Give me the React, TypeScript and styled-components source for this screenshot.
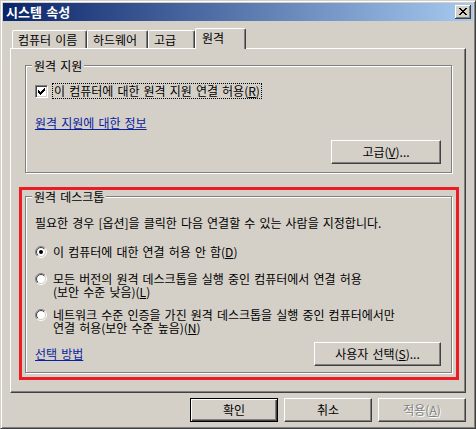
import React, { useId } from "react";
import styled, { createGlobalStyle } from "styled-components";

const GlobalStyle = createGlobalStyle`
  html, body { margin: 0; padding: 0; background: #D4D0C8; }
  body {
    font-family: "Noto Sans CJK KR", "Noto Sans", sans-serif;
    font-size: 12px;
    color: #000;
  }
  * { box-sizing: border-box; }
`;

const Win = styled.div`
  width: 476px;
  height: 429px;
  background: #d4d0c8;
  border: 1px solid;
  border-color: #d4d0c8 #404040 #404040 #d4d0c8;
  box-shadow: inset 1px 1px 0 #fff, inset -1px -1px 0 #808080;
  padding: 2px;
  display: flex;
  flex-direction: column;
  word-spacing: 1.4px;
  overflow: hidden;
`;

const TitleBar = styled.div`
  height: 18px;
  flex: none;
  display: flex;
  align-items: center;
  justify-content: space-between;
  padding: 0 2px 0 3px;
  background: linear-gradient(to right, #0a246a, #a6caf0);
`;

const TitleText = styled.span`
  color: #fff;
  font-weight: bold;
  font-size: 13px;
  line-height: 18px;
`;

const CloseBtn = styled.div`
  width: 16px;
  height: 14px;
  background: #d4d0c8;
  box-shadow: inset -1px -1px 0 #404040, inset 1px 1px 0 #fff,
    inset -2px -2px 0 #808080;
  display: flex;
  align-items: center;
  justify-content: center;
  padding-bottom: 1px;
`;

const Body = styled.div`
  flex: 1;
  display: flex;
  flex-direction: column;
  padding: 7px 7px 0 7px;
`;

const TabStrip = styled.div`
  height: 20px;
  flex: none;
  display: flex;
  align-items: flex-end;
  padding-left: 2px;
`;

const Tab = styled.div<{ $w: number; $active?: boolean }>`
  width: ${(p) => p.$w}px;
  height: ${(p) => (p.$active ? 21 : 18)}px;
  margin-bottom: ${(p) => (p.$active ? -1 : 0)}px;
  position: relative;
  z-index: ${(p) => (p.$active ? 1 : 0)};
  background: #d4d0c8;
  border-top: 1px solid #fff;
  border-left: 1px solid #fff;
  border-right: 1px solid #404040;
  border-radius: 2px 2px 0 0;
  box-shadow: inset -1px 0 0 #808080;
  display: flex;
  align-items: center;
  padding-left: ${(p) => (p.$active ? 6 : 5)}px;
  padding-bottom: ${(p) => (p.$active ? 2 : 0)}px;
  line-height: 12px;
  white-space: nowrap;
`;

const Panel = styled.div`
  height: 345px;
  flex: none;
  display: flex;
  flex-direction: column;
  align-items: flex-start;
  border-top: 1px solid #fff;
  border-left: 1px solid #fff;
  border-right: 1px solid #404040;
  border-bottom: 1px solid #404040;
  box-shadow: inset -1px -1px 0 #808080;
  padding-top: 16px;
`;

const Group = styled.div<{ $pb: number }>`
  width: 427px;
  display: flex;
  flex-direction: column;
  align-items: flex-start;
  border: 1px solid #808080;
  box-shadow: inset 1px 1px 0 #fff, 1px 1px 0 #fff;
  padding: 0 0 ${(p) => p.$pb}px 9px;
`;

const FirstGroup = styled(Group)`
  margin-left: 14px;
`;

const Legend = styled.div`
  margin: -7px 0 0 -3px;
  padding: 0 2px;
  background: #d4d0c8;
  line-height: 14px;
  white-space: nowrap;
`;

const RedFrame = styled.div`
  width: 440px;
  margin: 14px 0 0 8px;
  border: 3px solid #ed1c24;
  padding: 6px 0 4px 3px;
`;

const CheckRow = styled.div`
  margin-top: 10px;
  display: flex;
  align-items: center;
  gap: 4px;
`;

const CheckBox = styled.div`
  width: 13px;
  height: 13px;
  background: #fff;
  border: 1px solid;
  border-color: #808080 #fff #fff #808080;
  box-shadow: inset 1px 1px 0 #404040, inset -1px -1px 0 #d4d0c8;
  display: flex;
  align-items: center;
  justify-content: center;
`;

const FocusLabel = styled.span`
  border: 1px dotted #000;
  padding: 0 1px;
  line-height: 14px;
  white-space: nowrap;
`;

const Link = styled.a<{ $mt?: number }>`
  margin-top: ${(p) => p.$mt ?? 0}px;
  color: #0a22a0;
  text-decoration: underline;
  text-underline-offset: 1px;
  line-height: 14px;
  white-space: nowrap;
  cursor: pointer;
`;

const Mn = styled.span`
  text-decoration: underline;
  text-underline-offset: 1px;
`;

const Description = styled.div`
  margin-top: 12px;
  line-height: 13px;
  white-space: nowrap;
`;

const RadioRow = styled.div<{ $mt: number }>`
  margin-top: ${(p) => p.$mt}px;
  display: flex;
  align-items: flex-start;
  gap: 6px;
`;

const RadioLabel = styled.div`
  line-height: 13px;
  white-space: nowrap;
`;

const RadioSvg = styled.svg`
  flex: none;
  display: block;
  margin-top: 1px;
`;

const BottomRow = styled.div`
  align-self: stretch;
  margin-top: 8px;
  padding-right: 10px;
  display: flex;
  align-items: center;
  justify-content: space-between;
`;

const Button = styled.button<{ $w: number; $default?: boolean; $disabled?: boolean }>`
  width: ${(p) => p.$w}px;
  height: 24px;
  flex: none;
  margin: 0;
  padding: 0;
  font-family: inherit;
  font-size: 12px;
  word-spacing: 1.4px;
  line-height: 12px;
  background: #d4d0c8;
  color: ${(p) => (p.$disabled ? "#808080" : "#000")};
  text-shadow: ${(p) => (p.$disabled ? "1px 1px 0 #fff" : "none")};
  border: 1px solid;
  border-color: ${(p) => (p.$default ? "#000" : "#fff #404040 #404040 #fff")};
  box-shadow: ${(p) =>
    p.$default
      ? "inset 1px 1px 0 #fff, inset -1px -1px 0 #404040, inset -2px -2px 0 #808080"
      : "inset -1px -1px 0 #808080"};
  outline: none;
  white-space: nowrap;
`;

const AdvancedButton = styled(Button)`
  align-self: flex-end;
  margin: 10px 10px 0 0;
`;

const ButtonRow = styled.div`
  margin-top: 5px;
  display: flex;
  justify-content: flex-end;
  gap: 6px;
`;

const pixelPath = (rows: string[]) =>
  rows
    .map((r, y) =>
      [...r].map((c, x) => (c === "#" ? `M${x} ${y}h1v1h-1z` : "")).join("")
    )
    .join("");

const CLOSE = ["##....##", ".##..##.", "..####..", "...##...", "..####..", ".##..##.", "##....##"];
const CHECK = ["......#", ".....##", "#...###", "##.###.", "#####..", ".###...", "..#...."];

const CloseGlyph = () => (
  <svg width={8} height={7} viewBox="0 0 8 7" shapeRendering="crispEdges">
    <path d={pixelPath(CLOSE)} fill="#000" />
  </svg>
);

const CheckGlyph = () => (
  <svg width={7} height={7} viewBox="0 0 7 7" shapeRendering="crispEdges">
    <path d={pixelPath(CHECK)} fill="#000" />
  </svg>
);

const Radio = ({ checked }: { checked?: boolean }) => {
  const id = useId().replace(/[^a-zA-Z0-9]/g, "");
  return (
    <RadioSvg width={12} height={12} viewBox="0 0 12 12">
      <defs>
        <linearGradient id={`o${id}`} x1="0" y1="0" x2="1" y2="1">
          <stop offset="0.5" stopColor="#808080" />
          <stop offset="0.5" stopColor="#ffffff" />
        </linearGradient>
        <linearGradient id={`i${id}`} x1="0" y1="0" x2="1" y2="1">
          <stop offset="0.5" stopColor="#404040" />
          <stop offset="0.5" stopColor="#d4d0c8" />
        </linearGradient>
      </defs>
      <circle cx={6} cy={6} r={5.5} fill="none" stroke={`url(#o${id})`} strokeWidth={1} />
      <circle cx={6} cy={6} r={4.5} fill="#fff" stroke={`url(#i${id})`} strokeWidth={1} />
      {checked && <circle cx={6} cy={6} r={2} fill="#000" />}
    </RadioSvg>
  );
};

export default function App() {
  return (
    <>
      <GlobalStyle />
      <Win>
        <TitleBar>
          <TitleText>시스템 속성</TitleText>
          <CloseBtn>
            <CloseGlyph />
          </CloseBtn>
        </TitleBar>
        <Body>
          <TabStrip>
            <Tab $w={75}>컴퓨터 이름</Tab>
            <Tab $w={61}>하드웨어</Tab>
            <Tab $w={47}>고급</Tab>
            <Tab $w={51} $active>
              원격
            </Tab>
          </TabStrip>
          <Panel>
            <FirstGroup $pb={8}>
              <Legend>원격 지원</Legend>
              <CheckRow>
                <CheckBox>
                  <CheckGlyph />
                </CheckBox>
                <FocusLabel>
                  이 컴퓨터에 대한 원격 지원 연결 허용(<Mn>R</Mn>)
                </FocusLabel>
              </CheckRow>
              <Link $mt={17}>원격 지원에 대한 정보</Link>
              <AdvancedButton $w={110}>
                고급(<Mn>V</Mn>)...
              </AdvancedButton>
            </FirstGroup>
            <RedFrame>
              <Group $pb={6}>
                <Legend>원격 데스크톱</Legend>
                <Description>
                  필요한 경우 [옵션]을 클릭한 다음 연결할 수 있는 사람을 지정합니다.
                </Description>
                <RadioRow $mt={16}>
                  <Radio checked />
                  <RadioLabel>
                    이 컴퓨터에 대한 연결 허용 안 함(<Mn>D</Mn>)
                  </RadioLabel>
                </RadioRow>
                <RadioRow $mt={14}>
                  <Radio />
                  <RadioLabel>
                    모든 버전의 원격 데스크톱을 실행 중인 컴퓨터에서 연결 허용
                    <br />
                    (보안 수준 낮음)(<Mn>L</Mn>)
                  </RadioLabel>
                </RadioRow>
                <RadioRow $mt={10}>
                  <Radio />
                  <RadioLabel>
                    네트워크 수준 인증을 가진 원격 데스크톱을 실행 중인 컴퓨터에서만
                    <br />
                    연결 허용(보안 수준 높음)(<Mn>N</Mn>)
                  </RadioLabel>
                </RadioRow>
                <BottomRow>
                  <Link>선택 방법</Link>
                  <Button $w={127}>
                    사용자 선택(<Mn>S</Mn>)...
                  </Button>
                </BottomRow>
              </Group>
            </RedFrame>
          </Panel>
          <ButtonRow>
            <Button $w={88} $default>
              확인
            </Button>
            <Button $w={88}>취소</Button>
            <Button $w={88} $disabled>
              적용(<Mn>A</Mn>)
            </Button>
          </ButtonRow>
        </Body>
      </Win>
    </>
  );
}
